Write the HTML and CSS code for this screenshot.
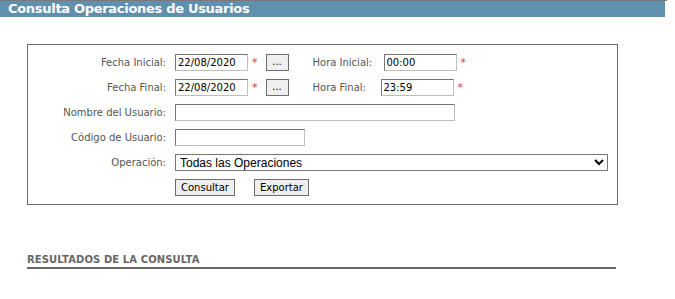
FILE: index.html
```html
<!DOCTYPE html>
<html lang="es">
<head>
    <meta charset="UTF-8">
    <title>Consulta Operaciones de Usuarios</title>
    <link rel="stylesheet" href="styles.css">
</head>
<body>
    <div class="titulo">
        <h1>Consulta Operaciones de Usuarios</h1>
    </div>

    <form class="filtros">
        <div class="fila">
            <label class="etiqueta" for="fini">Fecha Inicial:</label>
            <input class="campo fecha" type="text" id="fini" value="22/08/2020">
            <span class="req">*</span>
            <button type="button" class="btn-cal">...</button>
            <label class="etiqueta-hora" for="hini">Hora Inicial:</label>
            <input class="campo hora" type="text" id="hini" value="00:00">
            <span class="req">*</span>
        </div>
        <div class="fila">
            <label class="etiqueta" for="ffin">Fecha Final:</label>
            <input class="campo fecha" type="text" id="ffin" value="22/08/2020">
            <span class="req">*</span>
            <button type="button" class="btn-cal">...</button>
            <label class="etiqueta-hora corta" for="hfin">Hora Final:</label>
            <input class="campo hora" type="text" id="hfin" value="23:59">
            <span class="req">*</span>
        </div>
        <div class="fila">
            <label class="etiqueta" for="nombre">Nombre del Usuario:</label>
            <input class="campo nombre" type="text" id="nombre">
        </div>
        <div class="fila">
            <label class="etiqueta" for="codigo">C&oacute;digo de Usuario:</label>
            <input class="campo codigo" type="text" id="codigo">
        </div>
        <div class="fila">
            <label class="etiqueta" for="oper">Operaci&oacute;n:</label>
            <select class="operacion" id="oper">
                <option>Todas las Operaciones</option>
            </select>
        </div>
        <div class="fila botones">
            <button type="button" class="btn">Consultar</button>
            <button type="button" class="btn">Exportar</button>
        </div>
    </form>

    <h2 class="resultados">RESULTADOS DE LA CONSULTA</h2>
</body>
</html>
```

FILE: styles.css
```css
body {
    margin: 0;
    font-family: "DejaVu Sans", Verdana, sans-serif;
    font-size: 10px;
    color: #555;
    background: #fff;
}
.titulo {
    width: 667px;
    border-top: 1px solid #7a7a7a;
}
.titulo h1 {
    width: 657px;
    margin: 0;
    padding: 0 0 0 8px;
    height: 16px;
    line-height: 16px;
    background-color: #6190af;
    color: #fff;
    font-size: 13px;
    font-weight: bold;
    letter-spacing: -0.3px;
}
.filtros {
    width: 589px;
    height: 150px;
    margin: 27px 0 0 27px;
    border: 1px solid #6b6b6b;
    padding-top: 9px;
    box-sizing: content-box;
}
.fila {
    display: flex;
    align-items: center;
    height: 17px;
    margin-bottom: 8px;
}
.etiqueta {
    width: 138px;
    text-align: right;
    margin-right: 9px;
}
.etiqueta-hora {
    width: 71px;
    margin-left: 24px;
}
.etiqueta-hora.corta {
    width: 68px;
}
.campo {
    height: 17px;
    box-sizing: border-box;
    padding: 0 2px;
    border: 1px solid #bdbdbd;
    border-top-color: #767676;
    border-left-color: #767676;
    font-family: "DejaVu Sans", Verdana, sans-serif;
    font-size: 10px;
    color: #000;
    background: #fff;
}
.fecha, .hora {
    width: 73px;
}
.nombre {
    width: 280px;
}
.codigo {
    width: 130px;
}
.req {
    color: #f03030;
    margin: 0 8px 0 4px;
    font-size: 11px;
}
.btn-cal {
    width: 23px;
    height: 17px;
    padding: 0 0 3px;
    border: 1px solid #6e6e6e;
    background: #efefef;
    font-family: "DejaVu Sans", Verdana, sans-serif;
    font-size: 10px;
    color: #000;
}
.operacion {
    width: 433px;
    height: 17px;
    padding: 0;
    border: 1px solid #767676;
    border-radius: 0;
    font-family: "Liberation Sans", Arial, sans-serif;
    font-size: 12px;
    color: #000;
    background: #fff;
}
.botones {
    padding-left: 147px;
}
.btn {
    height: 17px;
    padding: 0 5px;
    margin-right: 19px;
    border: 1px solid #6e6e6e;
    background: #efefef;
    font-family: "DejaVu Sans", Verdana, sans-serif;
    font-size: 10px;
    color: #000;
}
.resultados {
    width: 589px;
    margin: 49px 0 0 27px;
    padding-bottom: 2px;
    border-bottom: 2px solid #676767;
    font-size: 10px;
    font-weight: bold;
    letter-spacing: 0.1px;
    color: #666;
}
```
